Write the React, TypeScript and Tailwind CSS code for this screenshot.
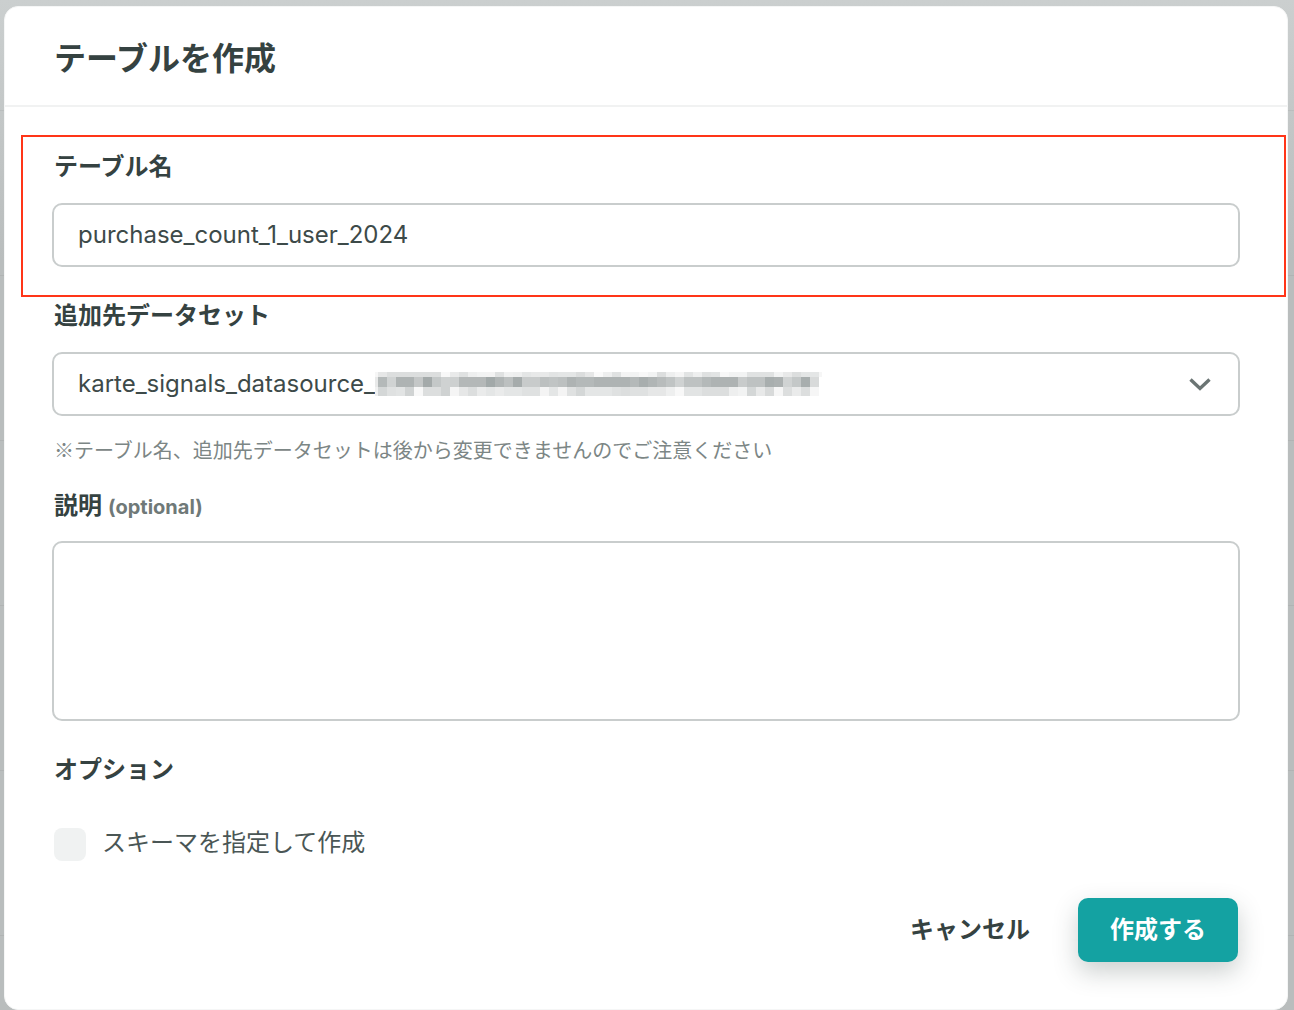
const blurRows = [
  "f6f6f6 e6e7e7 dcdede dcdede dcdede dcdede dcdede dcdede f8f8f8 e9eaea dfe1e1 eeefef f2f3f3 f3f3f3 dfe1e1 f0f1f1 eeefef e4e6e6 e8e9e9 e8e9e9 e2e4e4 e4e6e6 e4e6e6 dbdddd e6e7e7 fafafa eeefef e0e2e2 f4f4f4 f2f3f3 f8f8f8 f2f3f3 dcdede eeefef f5f5f5 e2e4e4 eeefef dfe1e1 e2e4e4 f8f8f8 f2f3f3 f2f3f3 e0e2e2 e0e2e2 e0e2e2 f2f3f3 e8e9e9 dcdede e4e6e6 e4e6e6 f6f6f6",
  "e8e9e9 b4b9b9 d0d3d3 aeb3b3 aeb3b3 c4c7c7 a4aaaa c4c8c8 cfd2d2 cdd0d0 b4b8b8 b4b8b8 b4b8b8 a2a9a9 b0b5b5 bcc0c0 a6acac c8cbcb c8cbcb bcc0c0 c0c4c4 bcc0c0 aeb3b3 b4b9b9 b4b9b9 aeb3b3 aeb3b3 aeb3b3 aeb3b3 b4b9b9 a8aeae b0b5b5 b8bcbc c0c4c4 cfd2d2 bec2c2 bec2c2 b4b9b9 aeb3b3 aeb3b3 aeb3b3 c8cbcb bec2c2 bec2c2 a8aeae acb1b1 d0d3d3 c4c8c8 a8aeae d8dada ffffff",
  "f0f1f1 d4d7d7 dfe1e1 e2e4e4 d0d3d3 f8f8f8 dcdede dcdede cfd2d2 f5f5f5 e6e7e7 dcdede eaebeb e4e6e6 eaebeb e4e6e6 e4e6e6 dfe1e1 dfe1e1 f4f4f4 e4e6e6 f4f4f4 dfe1e1 d4d7d7 e4e6e6 e4e6e6 e4e6e6 dfe1e1 dcdede dfe1e1 dfe1e1 e6e7e7 e6e7e7 eeefef f8f8f8 e2e4e4 e2e4e4 dcdede dcdede dcdede eeefef f2f3f3 d4d7d7 e8e9e9 d8dada f6f6f6 dcdede eaebeb dcdede f6f6f6 ffffff",
].map((row) => row.split(" "));
const rowTops = [0, 5, 15];
const rowHeights = [5, 10, 9];

function BlurredText() {
  return (
    <svg width="447" height="24" viewBox="0 0 447 24" shapeRendering="crispEdges" className="block shrink-0">
      {blurRows.map((row, y) =>
        row.map((color, x) => (
          <rect key={`${x}-${y}`} x={x * 9 - 6} y={rowTops[y]} width="9" height={rowHeights[y]} fill={`#${color}`} />
        ))
      )}
    </svg>
  );
}

function FieldLabel({ children }: { children: React.ReactNode }) {
  return <div className="text-[24px] leading-[32px] font-bold text-[#354241]">{children}</div>;
}

export default function App() {
  return (
    <div
      className="relative h-[1010px] w-[1294px] overflow-hidden bg-[repeating-linear-gradient(to_bottom,transparent_-54px,transparent_110px,rgba(0,0,0,0.05)_110px,rgba(0,0,0,0.05)_111px),linear-gradient(to_bottom,#cbcfcf_0,#b9bdbd_260px)] pl-[4px] pt-[6px] text-[#354241]"
      style={{ fontFamily: 'Inter, "Noto Sans CJK JP", sans-serif' }}
    >
      <div className="h-[1004px] w-[1284px] rounded-[14px] border border-[#f5f6f6] bg-white">
        {/* Header */}
        <div className="flex h-[100px] items-center border-b-2 border-[#f1f2f2] px-[49px] pt-[5px]">
          <h2 className="text-[32px] font-bold text-[#354241]">テーブルを作成</h2>
        </div>

        <div className="flex flex-col px-[47px] pt-[44px]">
          <div className="px-[2px]">
            <FieldLabel>テーブル名</FieldLabel>
          </div>
          <div className="mt-[20px] flex h-[64px] items-center rounded-[10px] border-2 border-[#c9cdcd] px-[24px] text-[24px] text-[#3d4a49]">
            purchase_count_1_user_2024
          </div>

          <div className="mt-[33px] px-[2px]">
            <FieldLabel>追加先データセット</FieldLabel>
          </div>
          <div className="mt-[20px] flex h-[64px] items-center rounded-[10px] border-2 border-[#c9cdcd] pl-[24px] pr-[26px] text-[24px] text-[#3d4a49]">
            <span>karte_signals_datasource_</span>
            <BlurredText />
            <svg width="24" height="24" viewBox="0 0 24 24" className="ml-auto text-[#6b7574]" fill="none" stroke="currentColor" strokeWidth="3.4">
              <path d="M2.5 7.5 12 16.5 21.5 7.5" />
            </svg>
          </div>

          <p
            className="mt-[20px] px-[2px] text-[20px] leading-[28px] text-[#7c8685]"
            style={{ fontFamily: '"Noto Sans CJK JP", sans-serif' }}
          >
            ※テーブル名、追加先データセットは後から変更できませんのでご注意ください
          </p>

          <div className="mt-[26px] flex items-baseline gap-[6px] px-[2px]">
            <FieldLabel>説明</FieldLabel>
            <span className="text-[20px] font-bold text-[#6f7978]">(optional)</span>
          </div>
          <div className="mt-[19px] h-[180px] rounded-[10px] border-2 border-[#c9cdcd]" />

          <div className="mt-[33px] px-[2px]">
            <FieldLabel>オプション</FieldLabel>
          </div>
          <label className="mt-[41px] flex items-center gap-[17px] px-[2px]">
            <span className="h-[33px] w-[32px] rounded-[8px] bg-[#f0f2f2]" />
            <span className="-ml-px pb-[2px] text-[24px] leading-[32px] text-[#4a5655]">スキーマを指定して作成</span>
          </label>

          <div className="mt-[37px] flex items-center justify-end pr-[2px]">
            <button className="text-[24px] font-bold text-[#354241]">キャンセル</button>
            <button className="ml-[48px] h-[64px] w-[160px] rounded-[10px] bg-[#14a2a2] text-[24px] font-bold text-white shadow-[0_10px_24px_rgba(53,66,65,0.25)]">
              作成する
            </button>
          </div>
        </div>
      </div>

      {/* Annotation */}
      <div className="absolute left-[21px] top-[135px] h-[162px] w-[1265px] border-2 border-[#ff3518]" />
    </div>
  );
}
